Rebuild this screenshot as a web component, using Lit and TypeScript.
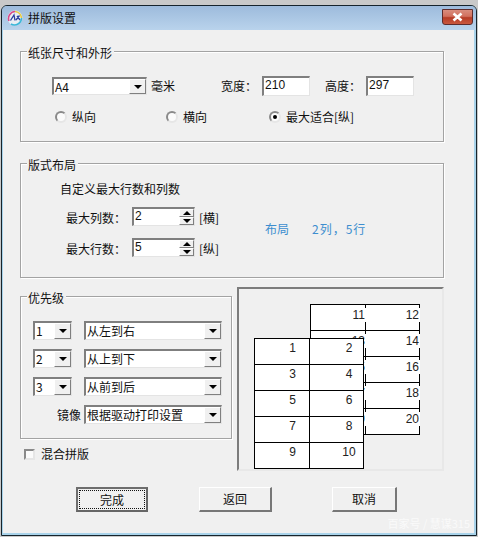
import { LitElement, html, css } from "lit";
import { customElement } from "lit/decorators.js";

const combo = (text: string, size: string) => html`
  <div class="sunken combo ${size}">
    <span class="value">${text}</span>
    <span class="drop"><i class="tri-down"></i></span>
  </div>
`;

const spin = (text: string) => html`
  <div class="sunken spin">
    <span class="value">${text}</span>
    <span class="arrows">
      <span class="step"><i class="tri-up"></i></span>
      <span class="step"><i class="tri-down"></i></span>
    </span>
  </div>
`;

const radio = (label: string, on = false) => html`
  <div class="radio-item">
    <span class="radio">${on ? html`<i></i>` : ""}</span>${label}
  </div>
`;

const pages = (start: number) =>
  Array.from({ length: 10 }, (_, i) => start + i);

@customElement("app-root")
export class AppRoot extends LitElement {
  static styles = css`
    :host {
      display: block;
      width: 478px;
      height: 537px;
      box-sizing: border-box;
      padding: 5px 1px 1px 1px;
      background: #c9c9c9;
      font-family: "Noto Sans CJK SC", "Liberation Sans", sans-serif;
      font-size: 12px;
      line-height: 14px;
      color: #111;
    }

    .window {
      height: 531px;
      box-sizing: border-box;
      border: 1px solid #16242c;
      border-radius: 6px 6px 0 0;
      overflow: hidden;
      display: flex;
      flex-direction: column;
      background: #a9d3ea;
    }

    .titlebar {
      flex: none;
      height: 24px;
      display: flex;
      align-items: center;
      padding: 0 3px 0 5px;
      background: linear-gradient(#9dbbdc, #b9d3ec);
    }

    .logo {
      flex: none;
      width: 16px;
      height: 16px;
      margin-right: 5px;
    }

    .title {
      flex: 1;
      margin-top: -1px;
    }

    .close {
      flex: none;
      width: 31px;
      height: 16px;
      margin-top: -3px;
      box-sizing: border-box;
      border: 1px solid #5e2c2c;
      border-radius: 0 0 3px 3px;
      background: linear-gradient(#d98d7e 0, #d2705e 45%, #b63c26 55%, #c9583f 100%);
      display: flex;
      align-items: center;
      justify-content: center;
    }

    .body {
      flex: 1;
      margin: 0 2px 2px 1px;
      padding: 21px 0 0 17px;
      background: #f0f0f0;
      position: relative;
    }

    .group {
      position: relative;
      box-sizing: border-box;
      border: 1px solid #a3a3a3;
      box-shadow: 1px 1px 0 #fff, inset 1px 1px 0 #fff;
    }

    .legend {
      position: absolute;
      top: -6px;
      left: 6px;
      padding: 0 2px 0 1px;
      background: #f0f0f0;
    }

    .paper {
      width: 424px;
      height: 91px;
      padding: 24px 0 0 31px;
    }

    .paper-row {
      display: flex;
      align-items: center;
      height: 20px;
    }

    .unit {
      margin-left: 4px;
    }

    .width-label {
      margin-left: 46px;
    }

    .height-label {
      margin-left: 15px;
    }

    .input {
      box-sizing: border-box;
      height: 20px;
      width: 48px;
      margin-left: 5px;
      padding-left: 1px;
    }

    .radios {
      display: grid;
      grid-template-columns: 111px 103px auto;
      margin: 14px 0 0 3px;
    }

    .radio-item {
      display: flex;
      align-items: center;
      gap: 5px;
    }

    .radio {
      width: 12px;
      height: 12px;
      box-sizing: border-box;
      border: 2px solid;
      border-color: #8a8a8a #e6e6e6 #e6e6e6 #8a8a8a;
      border-radius: 50%;
      background: #fbfbfb;
      display: flex;
      align-items: center;
      justify-content: center;
    }

    .radio i {
      width: 4px;
      height: 4px;
      border-radius: 50%;
      background: #000;
    }

    .layout {
      width: 424px;
      height: 115px;
      margin-top: 21px;
      padding: 18px 0 0 39px;
    }

    .layout-body {
      display: flex;
      align-items: center;
      margin-top: 11px;
      margin-left: 6px;
    }

    .spins {
      width: 199px;
      display: flex;
      flex-direction: column;
      gap: 12px;
    }

    .spin-row {
      display: flex;
      align-items: center;
      height: 19px;
    }

    .spin-label {
      width: 66px;
      padding-top: 2px;
    }

    .bracket {
      margin-left: 4px;
      padding-top: 2px;
    }

    .readout {
      display: flex;
      gap: 23px;
      margin-bottom: 6px;
      color: #3d8ecf;
    }

    .readout span + span {
      letter-spacing: 1px;
    }

    .lower {
      display: flex;
      gap: 5px;
      margin-top: 9px;
    }

    .left-col {
      padding-top: 9px;
    }

    .priority {
      width: 212px;
      height: 143px;
      padding: 24px 0 0 12px;
      display: flex;
      flex-direction: column;
      gap: 9px;
    }

    .prio-row {
      width: 189px;
      display: flex;
      align-items: center;
      justify-content: space-between;
    }

    .prio-row.end {
      justify-content: flex-end;
      gap: 3px;
    }

    .blend {
      display: flex;
      align-items: center;
      gap: 6px;
      margin: 8px 0 0 4px;
    }

    .check {
      width: 11px;
      height: 11px;
      box-sizing: border-box;
      border: 2px solid;
      border-color: #8a8a8a #e6e6e6 #e6e6e6 #8a8a8a;
      background: #fbfbfb;
    }

    .preview {
      position: relative;
      width: 207px;
      height: 184px;
      box-sizing: border-box;
      border: 2px solid;
      border-color: #7c7c7c #e8e8e8 #e8e8e8 #7c7c7c;
      overflow: hidden;
    }

    .sheet {
      position: absolute;
      display: grid;
      grid-template-columns: 55px 54px;
      grid-auto-rows: 26px;
      border-top: 1px solid #000;
      border-left: 1px solid #000;
      background: #fff;
      font-family: "Liberation Sans", sans-serif;
      color: #222;
    }

    .sheet.back {
      left: 71px;
      top: 15px;
    }

    .sheet.front {
      left: 15px;
      top: 49px;
    }

    .cell {
      box-sizing: border-box;
      border-right: 1px solid #000;
      border-bottom: 1px solid #000;
    }

    .back .num {
      display: block;
      margin: 3px -1px 0 0;
      padding-right: 1px;
      height: 14px;
      background: #fff;
      text-align: right;
    }

    .front .num {
      display: block;
      margin-top: 2px;
      text-align: center;
      padding-left: 21px;
    }

    .front .cell:nth-child(even) .num {
      padding-left: 25px;
    }

    .actions {
      display: flex;
      margin: 16px 0 0 56px;
    }

    .btn {
      box-sizing: border-box;
      height: 25px;
      display: flex;
      align-items: center;
      justify-content: center;
      border: 1px solid;
      border-color: #fff #777 #777 #fff;
      border-right-width: 2px;
      border-bottom-width: 2px;
      background: #f0f0f0;
    }

    .btn.done {
      width: 72px;
      border: 2px solid;
      border-color: #6d6d6d #666 #666 #6d6d6d;
    }

    .focus {
      width: 64px;
      height: 17px;
      border: 1px dotted #111;
      display: flex;
      align-items: center;
      justify-content: center;
    }

    .btn.back-btn {
      width: 73px;
      margin-left: 51px;
    }

    .btn.cancel {
      width: 65px;
      margin-left: 60px;
    }

    .watermark {
      position: absolute;
      right: 4px;
      bottom: 3px;
      color: #fafafa;
      font-size: 11px;
    }

    .sunken {
      box-sizing: border-box;
      border: 2px solid;
      border-color: #7f7f7f #e4e4e4 #e4e4e4 #7f7f7f;
      border-right-width: 1px;
      border-bottom-width: 1px;
      background: #fff;
      font-family: "Liberation Sans", "Noto Sans CJK SC", sans-serif;
    }

    .combo {
      display: flex;
      align-items: stretch;
      height: 19px;
      font-family: "Noto Sans CJK SC", "Liberation Sans", sans-serif;
    }

    .combo.md {
      width: 95px;
      height: 18px;
    }

    .combo.sm {
      width: 39px;
    }

    .combo.lg {
      width: 138px;
    }

    .value {
      flex: 1;
      min-width: 0;
      line-height: 15px;
      padding-left: 1px;
      white-space: nowrap;
    }

    .drop {
      flex: none;
      width: 17px;
      box-sizing: border-box;
      background: #f0f0f0;
      border: 1px solid;
      border-color: #fff #7f7f7f #7f7f7f #fff;
      display: flex;
      align-items: center;
      justify-content: center;
    }

    .tri-down {
      width: 0;
      height: 0;
      border-left: 4px solid transparent;
      border-right: 4px solid transparent;
      border-top: 4px solid #000;
    }

    .tri-up {
      width: 0;
      height: 0;
      border-left: 4px solid transparent;
      border-right: 4px solid transparent;
      border-bottom: 4px solid #000;
    }

    .spin {
      display: flex;
      align-items: stretch;
      width: 63px;
      height: 19px;
    }

    .arrows {
      flex: none;
      width: 15px;
      display: flex;
      flex-direction: column;
    }

    .step {
      flex: 1;
      box-sizing: border-box;
      background: #f0f0f0;
      border: 1px solid;
      border-color: #fff #7f7f7f #7f7f7f #fff;
      display: flex;
      align-items: center;
      justify-content: center;
    }
  `;

  render() {
    return html`
      <div class="window">
        <div class="titlebar">
          <svg class="logo" viewBox="0 0 16 16">
            <circle cx="8" cy="8" r="7.5" fill="#e9eef4" />
            <path d="M2 11 A7 7 0 0 1 8 1.5" fill="none" stroke="#d94b8a" stroke-width="1.6" />
            <path d="M8 1.5 A7 7 0 0 1 14.5 8" fill="none" stroke="#e8c93a" stroke-width="1.6" />
            <path d="M14.5 8 A7 7 0 0 1 4 14" fill="none" stroke="#39b7d8" stroke-width="1.6" />
            <path d="M3.5 10.5 L7 5 L8 10.5 M9 10 L12.5 5.5 M10 6 L13 10" fill="none" stroke="#2a3f9e" stroke-width="1.3" />
          </svg>
          <span class="title">拼版设置</span>
          <span class="close">
            <svg width="13" height="10" viewBox="0 0 13 10">
              <path d="M2.5 1.5 L10.5 8.5 M10.5 1.5 L2.5 8.5" stroke="#fff" stroke-width="2.6" />
            </svg>
          </span>
        </div>
        <div class="body">
          <div class="group paper">
            <span class="legend">纸张尺寸和外形</span>
            <div class="paper-row">
              ${combo("A4", "md")}
              <span class="unit">毫米</span>
              <span class="width-label">宽度&#xFF1A;</span>
              <span class="sunken input">210</span>
              <span class="height-label">高度&#xFF1A;</span>
              <span class="sunken input">297</span>
            </div>
            <div class="radios">
              ${radio("纵向")} ${radio("横向")} ${radio("最大适合[纵]", true)}
            </div>
          </div>

          <div class="group layout">
            <span class="legend">版式布局</span>
            <div>自定义最大行数和列数</div>
            <div class="layout-body">
              <div class="spins">
                <div class="spin-row">
                  <span class="spin-label">最大列数&#xFF1A;</span>
                  ${spin("2")}
                  <span class="bracket">[横]</span>
                </div>
                <div class="spin-row">
                  <span class="spin-label">最大行数&#xFF1A;</span>
                  ${spin("5")}
                  <span class="bracket">[纵]</span>
                </div>
              </div>
              <div class="readout">
                <span>布局</span>
                <span>2列&#xFF0C;5行</span>
              </div>
            </div>
          </div>

          <div class="lower">
            <div class="left-col">
              <div class="group priority">
                <span class="legend">优先级</span>
                <div class="prio-row">${combo("1", "sm")} ${combo("从左到右", "lg")}</div>
                <div class="prio-row">${combo("2", "sm")} ${combo("从上到下", "lg")}</div>
                <div class="prio-row">${combo("3", "sm")} ${combo("从前到后", "lg")}</div>
                <div class="prio-row end">
                  <span>镜像</span>
                  ${combo("根据驱动打印设置", "lg")}
                </div>
              </div>
              <div class="blend"><span class="check"></span>混合拼版</div>
            </div>
            <div class="preview">
              <div class="sheet back">
                ${pages(11).map((n) => html`<div class="cell"><span class="num">${n}</span></div>`)}
              </div>
              <div class="sheet front">
                ${pages(1).map((n) => html`<div class="cell"><span class="num">${n}</span></div>`)}
              </div>
            </div>
          </div>

          <div class="actions">
            <div class="btn done"><span class="focus">完成</span></div>
            <div class="btn back-btn">返回</div>
            <div class="btn cancel">取消</div>
          </div>
          <span class="watermark">百家号 / 慧谋315</span>
        </div>
      </div>
    `;
  }
}
